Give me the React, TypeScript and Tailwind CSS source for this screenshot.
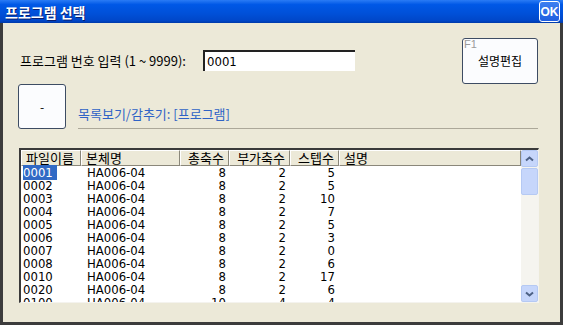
import React from 'react';

interface Row {
  file: string;
  body: string;
  axes: number;
  extra: number;
  steps: number;
}

const rows: Row[] = [
  { file: '0001', body: 'HA006-04', axes: 8, extra: 2, steps: 5 },
  { file: '0002', body: 'HA006-04', axes: 8, extra: 2, steps: 5 },
  { file: '0003', body: 'HA006-04', axes: 8, extra: 2, steps: 10 },
  { file: '0004', body: 'HA006-04', axes: 8, extra: 2, steps: 7 },
  { file: '0005', body: 'HA006-04', axes: 8, extra: 2, steps: 5 },
  { file: '0006', body: 'HA006-04', axes: 8, extra: 2, steps: 3 },
  { file: '0007', body: 'HA006-04', axes: 8, extra: 2, steps: 0 },
  { file: '0008', body: 'HA006-04', axes: 8, extra: 2, steps: 6 },
  { file: '0010', body: 'HA006-04', axes: 8, extra: 2, steps: 17 },
  { file: '0020', body: 'HA006-04', axes: 8, extra: 2, steps: 6 },
  { file: '0100', body: 'HA006-04', axes: 10, extra: 4, steps: 4 },
];

const KR = "font-['Noto_Sans_CJK_KR',sans-serif]";
const NUM = "font-['Liberation_Sans_Narrow','DejaVu_Sans_Condensed','Liberation_Sans',sans-serif]";

const Header: React.FC<{ w: string; right?: boolean; children?: React.ReactNode }> = ({ w, right, children }) => (
  <div
    className={`${w} h-full flex items-center px-[4px] bg-[#ECE9D8] border-t border-l border-white border-r border-r-[#8a877a] border-b border-b-[#8a877a] ${right ? 'justify-end' : ''}`}
  >
    {children}
  </div>
);

const Chevron: React.FC<{ down?: boolean }> = ({ down }) => (
  <svg width="9" height="6" viewBox="0 0 9 6">
    <path
      d={down ? 'M1 1.5 L4.5 4.5 L8 1.5' : 'M1 4.5 L4.5 1.5 L8 4.5'}
      fill="none"
      stroke="#4d6185"
      strokeWidth="2"
    />
  </svg>
);

const App: React.FC = () => {
  return (
    <div className={`w-[563px] h-[325px] flex flex-col overflow-hidden ${KR}`}>
      {/* Title bar */}
      <div className="h-[23px] flex items-center justify-between pl-[5px] pr-[3px] bg-[linear-gradient(to_bottom,#2a7bf5_0%,#0058e6_20%,#0050d8_60%,#0046c8_90%,#003aa8_100%)]">
        <span className="text-white font-bold text-[14px] leading-none [text-shadow:1px_1px_0_#0a1e6e]">프로그램 선택</span>
        <div className="w-[21px] h-[21px] rounded-[3px] border border-white flex items-center justify-center bg-[linear-gradient(to_bottom,#3d7ff0,#1f5ee0)]">
          <span className="text-white font-bold text-[12px] leading-none font-['Liberation_Sans',sans-serif]">OK</span>
        </div>
      </div>

      {/* Body */}
      <div className="flex-1 bg-[#ECE9D8] border-l-[3px] border-r-[3px] border-b-[3px] border-[#3c3c3c] pl-[15px] pr-[22px] pt-[15px]">
        <div className="flex items-start justify-between h-[46px]">
          <div className="mt-[12px] flex items-center">
            <span className="w-[185px] pl-[2px] text-[13px] text-black leading-none">프로그램 번호 입력 (1 ~ 9999):</span>
            <div className="w-[152px] h-[21px] bg-white border-t-2 border-l-2 border-[#222] flex items-center px-[2px]">
              <span className={`${NUM} text-[13px] leading-none`}>0001</span>
            </div>
          </div>
          <div className="w-[76px] h-[46px] rounded-[3px] border border-[#3d4c63] bg-[#fbfcfe] relative flex items-center justify-center">
            <span className="absolute left-[1px] top-[0px] text-[11px] text-[#9a9a9a] leading-none font-['Liberation_Sans',sans-serif]">F1</span>
            <span className="text-[12px] text-black">설명편집</span>
          </div>
        </div>

        <div className="flex items-end">
          <div className="w-[48px] h-[45px] rounded-[3px] border border-[#3d4c63] bg-[#fbfcfe] flex items-center justify-center">
            <span className="text-[12px] leading-none">-</span>
          </div>
          <div className="flex-1 ml-[12px] border-b border-[#aca899] pb-[4px]">
            <span className="text-[13px] text-[#2f63c6] leading-none">목록보기/감추기: [프로그램]</span>
          </div>
        </div>

        {/* List */}
        <div className="mt-[19px] ml-[1px] w-[520px] h-[155px] bg-white border-t-2 border-l-2 border-[#3a3a3a] border-r border-b border-r-[#f4f3ee] border-b-[#f4f3ee] flex overflow-hidden">
          <div className="flex-1 flex flex-col">
            <div className="h-[16px] flex text-[13px] text-black leading-[14px]">
              <Header w="w-[60px]">파일이름</Header>
              <Header w="w-[99px]">본체명</Header>
              <Header w="w-[49px]" right>총축수</Header>
              <Header w="w-[61px]" right>부가축수</Header>
              <Header w="w-[49px]" right>스텝수</Header>
              <Header w="flex-1">설명</Header>
            </div>
            <div className={`${NUM} text-[13px] text-black flex flex-col`}>
              {rows.map((r, i) => (
                <div key={r.file} className="h-[13px] flex items-center leading-[13px]">
                  <div className="w-[60px] pl-[2px]">
                    <span className={i === 0 ? 'bg-[#316ac5] text-white pr-[4px]' : ''}>{r.file}</span>
                  </div>
                  <div className="w-[99px] pl-[6px]">{r.body}</div>
                  <div className="w-[49px] text-right pr-[3px]">{r.axes}</div>
                  <div className="w-[61px] text-right pr-[4px]">{r.extra}</div>
                  <div className="w-[49px] text-right pr-[4px]">{r.steps}</div>
                  <div className="flex-1" />
                </div>
              ))}
            </div>
          </div>

          {/* Scrollbar */}
          <div className="w-[17px] bg-[#f5f4ef] flex flex-col">
            <div className="h-[17px] rounded-[2px] border border-[#b5c9f3] bg-[#c6d6fb] flex items-center justify-center">
              <Chevron />
            </div>
            <div className="h-[27px] mt-[1px] rounded-[2px] border border-[#b5c9f3] bg-[#c6d6fb]" />
            <div className="flex-1" />
            <div className="h-[17px] rounded-[2px] border border-[#b5c9f3] bg-[#c6d6fb] flex items-center justify-center">
              <Chevron down />
            </div>
          </div>
        </div>
      </div>
    </div>
  );
};

export default App;
